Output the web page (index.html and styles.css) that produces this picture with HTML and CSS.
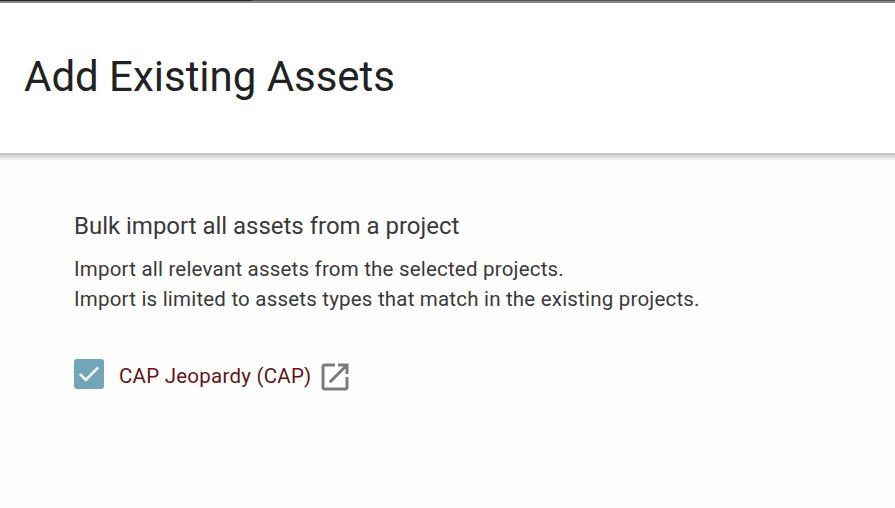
FILE: index.html
```html
<!DOCTYPE html>
<html lang="en">
<head>
    <meta charset="UTF-8">
    <meta name="viewport" content="width=device-width, initial-scale=1.0">
    <title>Add Existing Assets</title>
    <link rel="stylesheet" href="styles.css">
</head>
<body>
    <div class="top-bar">
        <div class="top-bar-dark"></div>
    </div>
    <header class="header">
        <h1>Add Existing Assets</h1>
    </header>
    <div class="header-shadow"></div>
    <main class="content">
        <h2>Bulk import all assets from a project</h2>
        <p class="description">
            Import all relevant assets from the selected projects.<br>
            Import is limited to assets types that match in the existing projects.
        </p>
        <div class="project">
            <label class="project-label">
                <input type="checkbox" class="checkbox-input" checked>
                <span class="checkbox">
                    <svg viewBox="0 0 30 30" width="30" height="30">
                        <path d="M5.8 14.8l6 6L24.2 8.3" fill="none" stroke="#f7f9fa" stroke-width="2.6"/>
                    </svg>
                </span>
                <span class="project-name">CAP Jeopardy (CAP)</span>
            </label>
            <a href="#" class="open-link" aria-label="Open project">
                <svg viewBox="0 0 24 24" width="36" height="36">
                    <path fill="#7b7b7b" d="M19 19H5V5h7V3H5c-1.11 0-2 .9-2 2v14c0 1.1.89 2 2 2h14c1.1 0 2-.9 2-2v-7h-2v7zM14 3v2h3.59l-9.83 9.83 1.41 1.41L19 6.41V10h2V3h-7z"/>
                </svg>
            </a>
        </div>
    </main>
</body>
</html>
```
FILE: styles.css
```css
body {
    font-family: Roboto, sans-serif;
    margin: 0;
    background-color: #fefefe;
    color: #3a3a3a;
}

.top-bar {
    height: 3px;
    background: linear-gradient(#555 1px, #888 1px);
}

.top-bar-dark {
    width: 252px;
    height: 1px;
    background: #222;
}

.header {
    box-sizing: border-box;
    height: 150px;
    padding: 50px 24px 0;
    background: #fff;
}

.header h1 {
    margin: 0;
    font-size: 42px;
    font-weight: 400;
    line-height: 48px;
    letter-spacing: -0.02px;
    color: #222;
}

.header-shadow {
    height: 7px;
    background: linear-gradient(#c2c2c2, #f4f4f4);
}

.content {
    padding: 51px 74px 0;
}

.content h2 {
    margin: 0;
    font-size: 24px;
    font-weight: 400;
    line-height: 30px;
    letter-spacing: -0.02px;
}

.description {
    margin: 13px 0 0;
    font-size: 20.5px;
    line-height: 30px;
    letter-spacing: 0.2px;
}

.project {
    display: flex;
    align-items: flex-start;
    margin-top: 45px;
}

.project-label {
    display: flex;
}

.checkbox-input {
    display: none;
}

.checkbox {
    width: 30px;
    height: 30px;
    margin-right: 15px;
    border-radius: 3px;
    background: #72a4ba;
}

.checkbox svg {
    display: block;
}

.project-name {
    padding-top: 2px;
    font-size: 20.5px;
    line-height: 30px;
    letter-spacing: 0.24px;
    color: #651518;
}

.open-link {
    height: 36px;
    margin-left: 5px;
}
```
